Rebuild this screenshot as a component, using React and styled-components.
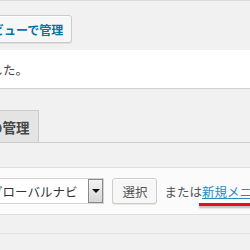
import React from "react";
import styled, { createGlobalStyle } from "styled-components";

const GlobalStyle = createGlobalStyle`
  body {
    margin: 0;
    background: #f1f1f1;
    font-family: "Noto Sans CJK JP", "DejaVu Sans", sans-serif;
    overflow: hidden;
  }
`;

const Page = styled.div`
  width: 250px;
  height: 250px;
  overflow: hidden;
  border-top: 1px solid #dcdcdc;
  box-sizing: border-box;
  background: #f1f1f1;
`;

const TitleRow = styled.div`
  display: flex;
  padding-top: 14px;
  height: 35px;
`;

const ActionButton = styled.a`
  display: inline-flex;
  align-items: center;
  flex-shrink: 0;
  height: 28px;
  box-sizing: border-box;
  margin-left: ${p => p.shift}px;
  padding: 0 8px;
  border: 1px solid #cccccc;
  border-radius: 3px;
  background: #f7f7f7;
  box-shadow: inset 0 1px 0 #fff, 0 1px 0 rgba(0, 0, 0, 0.08);
  color: #0074a2;
  font-size: 12px;
  font-weight: 700;
  white-space: nowrap;
`;

const Notice = styled.div`
  display: flex;
  align-items: center;
  height: 38px;
  background: #fff;
  box-shadow: 0 1px 1px rgba(0, 0, 0, 0.12);
  font-size: 12.5px;
  color: #444;
  white-space: nowrap;
`;

const NoticeText = styled.p`
  margin: 0 0 0 ${p => p.shift}px;
  flex-shrink: 0;
`;

const TabBar = styled.div`
  display: flex;
  margin-top: 22px;
  border-bottom: 1px solid #cccccc;
  height: 32px;
`;

const Tab = styled.div`
  display: flex;
  align-items: center;
  flex-shrink: 0;
  margin-left: ${p => p.shift}px;
  padding: 0 8px 0 10px;
  border: 1px solid #cccccc;
  border-bottom: none;
  background: #e4e4e4;
  color: #464646;
  font-size: 13.5px;
  font-weight: 700;
  white-space: nowrap;
`;

const ManageBox = styled.div`
  display: flex;
  align-items: center;
  gap: 7px;
  margin-top: 24px;
  margin-left: ${p => p.shift}px;
  width: 400px;
  padding: 10px;
  border: 1px solid #dfdfdf;
  background: #fbfbfb;
  font-size: 12.5px;
  color: #555;
  white-space: nowrap;
`;

const Select = styled.div`
  display: flex;
  align-items: center;
  justify-content: space-between;
  gap: 11px;
  height: 26px;
  box-sizing: border-box;
  padding-left: 4px;
  border: 1px solid #d4d4d4;
  background: #fff;
  color: #333;
`;

const Arrow = styled.span`
  display: flex;
  align-items: center;
  justify-content: center;
  width: 15px;
  height: 24px;
  box-sizing: border-box;
  border: 1px solid #8a8a8a;
  background: linear-gradient(#f4f4f4, #d6d6d6);
`;

const Triangle = styled.span`
  width: 0;
  height: 0;
  border-left: 4px solid transparent;
  border-right: 4px solid transparent;
  border-top: 4px solid #111;
`;

const Button = styled.button`
  height: 26px;
  margin-left: 1px;
  padding: 0 9px;
  border: 1px solid #cccccc;
  border-radius: 3px;
  background: #f7f7f7;
  box-shadow: inset 0 1px 0 #fff, 0 1px 0 rgba(0, 0, 0, 0.08);
  color: #555;
  font-family: inherit;
  font-size: 12.5px;
`;

const Inline = styled.span`
  display: inline-flex;
`;

const Link = styled.a`
  position: relative;
  color: #2a8bc0;
  text-decoration: underline;

  &::after {
    content: "";
    position: absolute;
    left: -3px;
    right: -10px;
    bottom: -5px;
    height: 3px;
    background: #e8101a;
    box-shadow: 0 2px 2px rgba(0, 0, 0, 0.25);
  }
`;

const Lower = styled.div`
  margin-top: 18px;
  border-top: 1px solid #e2e2e2;
  height: 40px;
`;

export default function App() {
  return (
    <>
      <GlobalStyle />
      <Page>
        <TitleRow>
          <ActionButton shift={-77}>ライブプレビューで管理</ActionButton>
        </TitleRow>
        <Notice>
          <NoticeText shift={-122}>メニューを更新しました。</NoticeText>
        </Notice>
        <TabBar>
          <Tab shift={-49}>位置の管理</Tab>
        </TabBar>
        <ManageBox shift={-26}>
          <Select>
            <span>グローバルナビ</span>
            <Arrow>
              <Triangle />
            </Arrow>
          </Select>
          <Button>選択</Button>
          <Inline>
            または<Link>新規メニューを作成</Link>しましょう。
          </Inline>
        </ManageBox>
        <Lower />
      </Page>
    </>
  );
}
